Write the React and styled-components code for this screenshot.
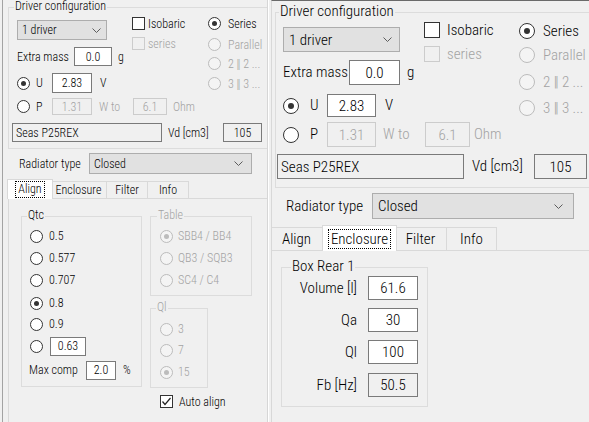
import React from 'react'
import styled, { createGlobalStyle } from 'styled-components'

const GlobalStyle = createGlobalStyle`
  html, body { margin: 0; padding: 0; background: #f0f0f0; }
  body { width: 589px; height: 422px; overflow: hidden; }
`

// sizes for the small (96 dpi) and the large (scaled) copy of the form
const L = {
  fs: 12,
  g: { ml: 5, mt: 7, w: 275, h: 142, lg: 5 },
  cols: { mt: 9, pl: 8, h: 106 },
  leftW: 115, midW: 76,
  combo: { mt: 3, w: 90, h: 20, pl: 4, pr: 5 },
  ex: { mt: 7, h: 19, lw: 57, tw: 38, gml: 6 },
  u: { mt: 7, h: 20, lml: 6, lw: 16, tw: 40, vml: 8 },
  p: { mt: 5, h: 17, tw: 40, wml: 7, ww: 34, tw2: 34, oml: 6 },
  rad: 13, rgap: 7, rightMt: [0, 8, 6, 7],
  chk: 13, cgap: 3, chkMt: [0, 7],
  bot: { pl: 3, h: 19, sw: 150, vml: 6, vw: 55, tw: 39 },
  rt: { mt: 4, pl: 16, h: 21, lw: 70, cw: 163 },
  tabs: { mt: 5, ml: 6, h: 19, uh: 17, sh: 20, w: [42, 56, 41, 41], sel: 0 },
}

const R = {
  fs: 15,
  g: { ml: 3, mt: 11, w: 330, h: 176, lg: 3 },
  cols: { mt: 9, pl: 7, h: 132 },
  leftW: 141, midW: 95,
  combo: { mt: 5, w: 117, h: 25, pl: 5, pr: 7 },
  ex: { mt: 8, h: 25, lw: 66, tw: 51, gml: 7 },
  u: { mt: 9, h: 23, lml: 11, lw: 17, tw: 49, vml: 9 },
  p: { mt: 5, h: 25, tw: 49, wml: 7, ww: 42, tw2: 45, oml: 4 },
  rad: 16, rgap: 8, rightMt: [1, 8, 11, 10],
  chk: 16, cgap: 7, chkMt: [0, 8],
  bot: { pl: 1, h: 25, sw: 187, vml: 8, vw: 62, tw: 53 },
  rt: { mt: 5, pl: 14, h: 26, lw: 86, cw: 202 },
  tabs: { mt: 6, ml: -3, h: 25, uh: 23, sh: 26, w: [55, 71, 52, 50], sel: 1 },
}

const TAB_NAMES = ['Align', 'Enclosure', 'Filter', 'Info']

function App() {
  return (
    <Screen>
      <GlobalStyle />
      <Panel $w={266} $fs={L.fs} $ml={2} $edge="#a3a3a3" $right="#d6d6d6">
        <DriverConfig m={L} />
        <RadiatorRow m={L} />
        <TabStrip m={L} />
        <TabPage $ml={5} $border>
          <AlignPage />
        </TabPage>
      </Panel>
      <Divider />
      <Panel $w={318} $fs={R.fs} $edge="#d8d8d8" $top="#6a6a6a">
        <DriverConfig m={R} />
        <RadiatorRow m={R} />
        <TabStrip m={R} />
        <TabPage>
          <EnclosurePage />
        </TabPage>
      </Panel>
    </Screen>
  )
}

export default App

function Wiring({ n }) {
  return (
    <>
      {n} <Bars>||</Bars> {n} ...
    </>
  )
}

function DriverConfig({ m }) {
  const rightRadios = ['Series', 'Parallel', <Wiring n="2" />, <Wiring n="3" />]
  return (
    <Group $w={m.g.w} $h={m.g.h} $mt={m.g.mt} $ml={m.g.ml}>
      <Legend $left={m.g.lg}>Driver configuration</Legend>
      <Cols $mt={m.cols.mt} $pl={m.cols.pl} $h={m.cols.h}>
        <Col $w={m.leftW}>
          <Combo $w={m.combo.w} $h={m.combo.h} $mt={m.combo.mt} $pl={m.combo.pl} $pr={m.combo.pr}>
            <span>1 driver</span>
            <Chevron />
          </Combo>
          <Row $h={m.ex.h} $mt={m.ex.mt}>
            <Label $w={m.ex.lw}>Extra mass</Label>
            <TextBox $w={m.ex.tw}>0.0</TextBox>
            <Label $ml={m.ex.gml}>g</Label>
          </Row>
          <Row $h={m.u.h} $mt={m.u.mt}>
            <Radio $s={m.rad} $on />
            <Label $ml={m.u.lml} $w={m.u.lw}>U</Label>
            <TextBox $w={m.u.tw}>2.83</TextBox>
            <Label $ml={m.u.vml}>V</Label>
          </Row>
          <Row $h={m.p.h} $mt={m.p.mt}>
            <Radio $s={m.rad} />
            <Label $ml={m.u.lml} $w={m.u.lw}>P</Label>
            <TextBox $w={m.p.tw} $dis>1.31</TextBox>
            <Label $ml={m.p.wml} $w={m.p.ww} $dis>W to</Label>
            <TextBox $w={m.p.tw2} $dis>6.1</TextBox>
            <Label $ml={m.p.oml} $dis>Ohm</Label>
          </Row>
        </Col>
        <Col $w={m.midW}>
          <Row $h={m.chk} $mt={m.chkMt[0]}>
            <CheckBox $s={m.chk} />
            <Label $ml={m.cgap}>Isobaric</Label>
          </Row>
          <Row $h={m.chk} $mt={m.chkMt[1]}>
            <CheckBox $s={m.chk} $dis />
            <Label $ml={m.cgap} $dis>series</Label>
          </Row>
        </Col>
        <Col>
          {rightRadios.map((t, i) => (
            <Row key={i} $h={m.rad} $mt={m.rightMt[i]}>
              <Radio $s={m.rad} $on={i === 0} $dis={i > 0} />
              <Label $ml={m.rgap} $dis={i > 0}>{t}</Label>
            </Row>
          ))}
        </Col>
      </Cols>
      <Row $h={m.bot.h} $pl={m.bot.pl}>
        <TextBox $w={m.bot.sw} $ro $left>Seas P25REX</TextBox>
        <Label $ml={m.bot.vml} $w={m.bot.vw}>Vd [cm3]</Label>
        <TextBox $w={m.bot.tw} $ro>105</TextBox>
      </Row>
    </Group>
  )
}

function RadiatorRow({ m }) {
  return (
    <Row $h={m.rt.h} $mt={m.rt.mt} $pl={m.rt.pl}>
      <Label $w={m.rt.lw}>Radiator type</Label>
      <Combo $w={m.rt.cw} $h={m.rt.h} $pl={m.combo.pl} $pr={m.combo.pr + 3}>
        <span>Closed</span>
        <Chevron />
      </Combo>
    </Row>
  )
}

function TabStrip({ m }) {
  const t = m.tabs
  return (
    <Strip $h={t.h} $mt={t.mt} $ml={t.ml}>
      {TAB_NAMES.map((name, i) => (
        <Tab key={name} $w={t.w[i]} $h={i === t.sel ? t.sh : t.uh} $sel={i === t.sel} $first={i === 0}>
          {i === t.sel ? <Focus>{name}</Focus> : name}
        </Tab>
      ))}
    </Strip>
  )
}

function AlignPage() {
  const qtc = ['0.5', '0.577', '0.707', '0.8', '0.9']
  const qtcMt = [9, 2, 2, 3, 1]
  return (
    <PageRow>
      <Group $w={121} $h={171} $mt={17} $ml={12}>
        <Legend $left={5}>Qtc</Legend>
        {qtc.map((q, i) => (
          <Row key={q} $h={20} $mt={qtcMt[i]} $pl={8}>
            <Radio $s={13} $on={q === '0.8'} />
            <Label $ml={6}>{q}</Label>
          </Row>
        ))}
        <Row $h={20} $mt={2} $pl={8}>
          <Radio $s={13} />
          <TextBox $w={36} $h={19} $ml={7}>0.63</TextBox>
        </Row>
        <Row $h={20} $mt={4} $pl={7}>
          <Label $w={57}>Max comp</Label>
          <TextBox $w={30} $h={19}>2.0</TextBox>
          <Label $ml={7}>%</Label>
        </Row>
      </Group>
      <Stack $ml={8} $mt={17}>
        <Group $w={102} $h={80}>
          <Legend $left={6} $dis>Table</Legend>
          {['SBB4 / BB4', 'QB3 / SQB3', 'SC4 / C4'].map((t, i) => (
            <Row key={t} $h={20} $mt={i === 0 ? 9 : 2} $pl={9}>
              <Radio $s={13} $dis $on={i === 0} />
              <Label $ml={5} $dis>{t}</Label>
            </Row>
          ))}
        </Group>
        <Group $w={58} $h={80} $mt={12}>
          <Legend $left={5} $dis>Ql</Legend>
          {['3', '7', '15'].map((t, i) => (
            <Row key={t} $h={20} $mt={[10, 1, 2][i]} $pl={9}>
              <Radio $s={13} $dis $on={i === 2} />
              <Label $ml={5} $dis>{t}</Label>
            </Row>
          ))}
        </Group>
        <Row $h={13} $mt={7} $pl={10}>
          <CheckBox $s={13} $on />
          <Label $ml={6}>Auto align</Label>
        </Row>
      </Stack>
    </PageRow>
  )
}

function EnclosurePage() {
  const rows = [
    ['Volume [l]', '61.6'],
    ['Qa', '30'],
    ['Ql', '100'],
    ['Fb [Hz]', '50.5'],
  ]
  return (
    <Group $w={147} $h={140} $mt={16} $ml={9}>
      <Legend $left={9}>Box Rear 1</Legend>
      {rows.map(([l, v], i) => (
        <Row key={l} $h={24} $mt={i === 3 ? 9 : 8}>
          <Label $w={75} $right>{l}</Label>
          <TextBox $w={50} $ml={11} $ro={i === 3}>{v}</TextBox>
        </Row>
      ))}
    </Group>
  )
}

function Chevron() {
  return (
    <svg width="9" height="5" viewBox="0 0 9 5" style={{ flex: 'none' }}>
      <polyline points="0.5,0.5 4.5,4.5 8.5,0.5" fill="none" stroke="#5c5c5c" strokeWidth="1" />
    </svg>
  )
}

function Radio({ $s, $on, $dis }) {
  return <RadioDot $s={$s} $on={$on} $dis={$dis} />
}

function CheckBox({ $s, $on, $dis }) {
  return (
    <CheckBoxBox $s={$s} $dis={$dis}>
      {$on && (
        <svg width={$s - 2} height={$s - 2} viewBox="0 0 11 11">
          <polyline points="1.5,5.5 4,8.5 9.5,2" fill="none" stroke="#222" strokeWidth="1.2" />
        </svg>
      )}
    </CheckBoxBox>
  )
}

const Screen = styled.div`
  display: flex;
  width: 589px;
  height: 422px;
  overflow: hidden;
  background: #f0f0f0;
  font-family: "Roboto Condensed", "Liberation Sans", sans-serif;
  font-weight: 350;
  color: #000;
`

const Panel = styled.div`
  position: relative;
  flex: none;
  display: flex;
  flex-direction: column;
  box-sizing: border-box;
  width: ${p => p.$w}px;
  height: 422px;
  overflow: hidden;
  margin-left: ${p => p.$ml || 0}px;
  font-size: ${p => p.$fs}px;
  border-left: 1px solid ${p => p.$edge};
  border-right: ${p => (p.$right ? `1px solid ${p.$right}` : 'none')};
  border-top: ${p => (p.$top ? `1px solid ${p.$top}` : 'none')};
`

const Divider = styled.div`
  flex: none;
  width: 1px;
  height: 422px;
  margin-right: 2px;
  background: #ffffff;
`

const Group = styled.div`
  position: relative;
  flex: none;
  box-sizing: border-box;
  width: ${p => p.$w}px;
  height: ${p => p.$h}px;
  margin: ${p => p.$mt || 0}px 0 0 ${p => p.$ml || 0}px;
  border: 1px solid #dcdcdc;
`

const Legend = styled.span`
  position: absolute;
  left: ${p => p.$left}px;
  top: -1px;
  transform: translateY(-52%);
  padding: 0 1px;
  background: #f0f0f0;
  line-height: 1.15;
  white-space: nowrap;
  color: ${p => (p.$dis ? '#a3a3a3' : '#000')};
`

const Cols = styled.div`
  display: flex;
  align-items: flex-start;
  height: ${p => p.$h}px;
  margin-top: ${p => p.$mt}px;
  padding-left: ${p => p.$pl}px;
`

const Col = styled.div`
  flex: none;
  display: flex;
  flex-direction: column;
  width: ${p => (p.$w ? `${p.$w}px` : 'auto')};
`

const Stack = styled.div`
  display: flex;
  flex-direction: column;
  margin: ${p => p.$mt}px 0 0 ${p => p.$ml}px;
`

const PageRow = styled.div`
  display: flex;
  align-items: flex-start;
`

const Row = styled.div`
  flex: none;
  display: flex;
  align-items: center;
  height: ${p => p.$h}px;
  margin-top: ${p => p.$mt || 0}px;
  padding-left: ${p => p.$pl || 0}px;
  white-space: nowrap;
`

const Label = styled.span`
  flex: none;
  width: ${p => (p.$w ? `${p.$w}px` : 'auto')};
  margin-left: ${p => p.$ml || 0}px;
  text-align: ${p => (p.$right ? 'right' : 'left')};
  line-height: 1;
  color: ${p => (p.$dis ? '#a3a3a3' : '#000')};
`

const Bars = styled.span`
  letter-spacing: -0.12em;
  margin-right: 0.12em;
`

const TextBox = styled.div`
  flex: none;
  box-sizing: border-box;
  display: flex;
  align-items: center;
  justify-content: ${p => (p.$left ? 'flex-start' : 'center')};
  width: ${p => p.$w}px;
  height: ${p => (p.$h ? `${p.$h}px` : '100%')};
  margin-left: ${p => p.$ml || 0}px;
  padding: 0 3px;
  border: 1px solid ${p => (p.$dis ? '#cccccc' : '#7a7a7a')};
  background: ${p => (p.$dis || p.$ro ? '#f0f0f0' : '#ffffff')};
  color: ${p => (p.$dis ? '#a3a3a3' : '#000')};
`

const Combo = styled.div`
  flex: none;
  box-sizing: border-box;
  display: flex;
  align-items: center;
  justify-content: space-between;
  width: ${p => p.$w}px;
  height: ${p => p.$h}px;
  margin-top: ${p => p.$mt || 0}px;
  padding: 0 ${p => p.$pr}px 0 ${p => p.$pl}px;
  background: #e1e1e1;
  border: 1px solid #adadad;
`

const RadioDot = styled.span`
  position: relative;
  flex: none;
  box-sizing: border-box;
  width: ${p => p.$s}px;
  height: ${p => p.$s}px;
  border-radius: 50%;
  border: 1px solid ${p => (p.$dis ? '#bcbcbc' : '#333333')};
  background: ${p => (p.$dis ? '#f4f4f4' : '#ffffff')};

  &::after {
    content: '';
    display: ${p => (p.$on ? 'block' : 'none')};
    position: absolute;
    inset: ${p => Math.round(p.$s * 0.23)}px;
    border-radius: 50%;
    background: ${p => (p.$dis ? '#bcbcbc' : '#333333')};
  }
`

const CheckBoxBox = styled.span`
  flex: none;
  box-sizing: border-box;
  display: flex;
  align-items: center;
  justify-content: center;
  width: ${p => p.$s}px;
  height: ${p => p.$s}px;
  border: 1px solid ${p => (p.$dis ? '#cccccc' : '#333333')};
  background: ${p => (p.$dis ? '#f0f0f0' : '#ffffff')};
`

const Strip = styled.div`
  position: relative;
  z-index: 1;
  flex: none;
  display: flex;
  align-items: flex-end;
  height: ${p => p.$h}px;
  margin: ${p => p.$mt}px 0 0 ${p => p.$ml}px;
`

const Tab = styled.div`
  position: relative;
  z-index: ${p => (p.$sel ? 2 : 1)};
  flex: none;
  box-sizing: border-box;
  display: flex;
  align-items: center;
  justify-content: center;
  width: ${p => (p.$sel ? p.$w + 4 : p.$w)}px;
  height: ${p => p.$h}px;
  margin: 0 ${p => (p.$sel ? -2 : 0)}px ${p => (p.$sel ? -1 : 0)}px ${p => (p.$sel ? -2 : 0)}px;
  border-top: 1px solid #d9d9d9;
  border-right: 1px solid #d9d9d9;
  border-left: ${p => (p.$first || p.$sel ? '1px solid #d9d9d9' : 'none')};
  background: ${p => (p.$sel ? '#ffffff' : '#f0f0f0')};
  white-space: nowrap;
`

const Focus = styled.span`
  outline: 1px dotted #000;
  outline-offset: 0;
  padding: 0 2px;
  line-height: 1.2;
`

const TabPage = styled.div`
  flex: 1;
  box-sizing: border-box;
  margin-left: ${p => p.$ml || 0}px;
  border-top: 1px solid #d9d9d9;
  border-left: ${p => (p.$border ? '1px solid #d9d9d9' : 'none')};
  background: #f0f0f0;
`
